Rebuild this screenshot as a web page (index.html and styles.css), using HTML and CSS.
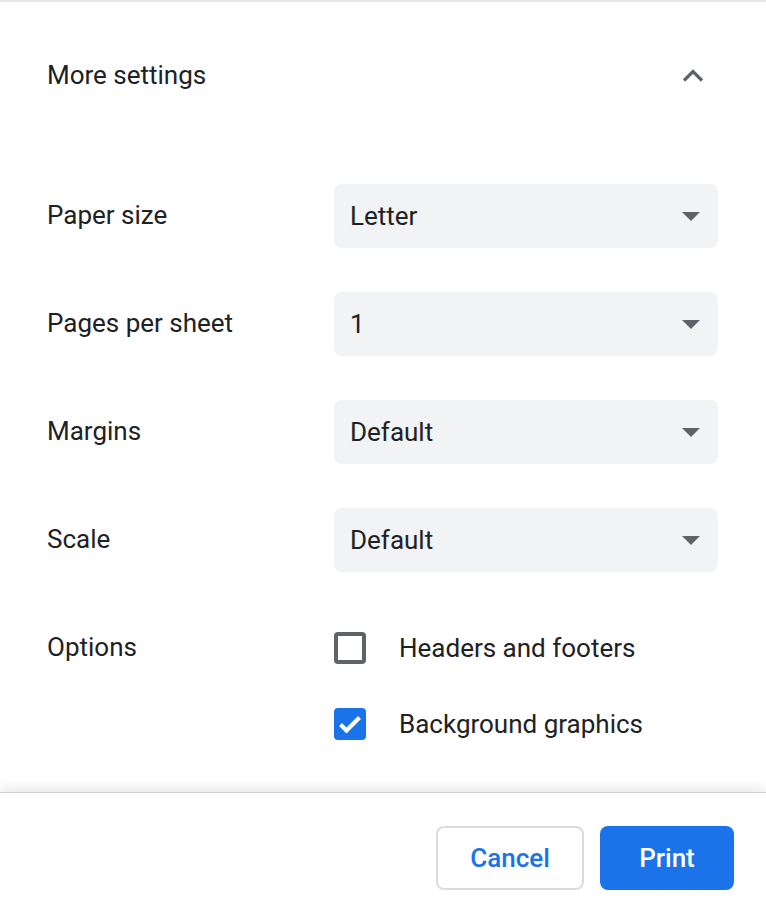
FILE: index.html
```html
<!DOCTYPE html>
<html lang="en">
<head>
<meta charset="utf-8" />
<title>Print</title>
<link rel="stylesheet" href="styles.css">
</head>
<body>
<div class="dialog">
  <div class="content">
    <div class="more">
      <span>More settings</span>
      <svg class="chevron" width="24" height="16" viewBox="0 0 24 16">
        <polyline points="3,13.5 12,4.5 21,13.5" fill="none" stroke="#5f6368" stroke-width="3.2" />
      </svg>
    </div>

    <div class="settings">
      <div class="row">
        <div class="label">Paper size</div>
        <div class="select"><span>Letter</span><i class="arrow"></i></div>
      </div>
      <div class="row">
        <div class="label">Pages per sheet</div>
        <div class="select"><span>1</span><i class="arrow"></i></div>
      </div>
      <div class="row">
        <div class="label">Margins</div>
        <div class="select"><span>Default</span><i class="arrow"></i></div>
      </div>
      <div class="row">
        <div class="label">Scale</div>
        <div class="select"><span>Default</span><i class="arrow"></i></div>
      </div>
      <div class="row options">
        <div class="label">Options</div>
        <div class="checks">
          <div class="check">
            <span class="box"></span>
            <span>Headers and footers</span>
          </div>
          <div class="check">
            <span class="box checked">
              <svg width="32" height="32" viewBox="0 0 32 32">
                <polyline points="6.5,16.5 12.5,22.5 25.5,9.5" fill="none" stroke="#fff" stroke-width="4.2" />
              </svg>
            </span>
            <span>Background graphics</span>
          </div>
        </div>
      </div>
    </div>
  </div>

  <div class="footer">
    <button class="btn cancel">Cancel</button>
    <button class="btn print">Print</button>
  </div>
</div>
</body>
</html>
```

FILE: styles.css
```css
body {
  margin: 0;
  padding: 0;
  background-color: #fff;
  font-family: Roboto, "Liberation Sans", sans-serif;
  color: #202124;
}

.dialog {
  width: 766px;
  height: 918px;
  display: flex;
  flex-direction: column;
  border-top: 2px solid #e8e8ec;
  box-sizing: border-box;
}

.content {
  height: 790px;
  padding: 0 48px 0 47px;
}

.more {
  display: flex;
  align-items: center;
  justify-content: space-between;
  height: 64px;
  margin-top: 41px;
  font-size: 26px;
}

.chevron {
  margin-right: 13px;
}

.settings {
  margin-top: 77px;
  display: flex;
  flex-direction: column;
  gap: 44px;
}

.row {
  display: flex;
  align-items: center;
  height: 64px;
}

.label {
  width: 287px;
  font-size: 26px;
  padding-bottom: 2px;
}

.select {
  flex: 1;
  height: 64px;
  background-color: #f1f3f4;
  border-radius: 8px;
  display: flex;
  align-items: center;
  justify-content: space-between;
  padding: 0 18px 0 16px;
  font-size: 26px;
}

.arrow {
  width: 0;
  height: 0;
  border-left: 9px solid transparent;
  border-right: 9px solid transparent;
  border-top: 9px solid #5f6368;
  margin-top: 1px;
}

.options {
  align-items: flex-start;
  height: auto;
}

.options .label {
  padding-top: 16px;
}

.checks {
  display: flex;
  flex-direction: column;
  gap: 44px;
  padding-top: 16px;
}

.check {
  display: flex;
  align-items: center;
  gap: 33px;
  height: 32px;
  font-size: 26px;
}

.box {
  width: 32px;
  height: 32px;
  box-sizing: border-box;
  border: 4px solid #5f6368;
  border-radius: 4px;
  display: flex;
  align-items: center;
  justify-content: center;
}

.box.checked {
  border: none;
  background-color: #1a73e8;
}

.footer {
  flex: 1;
  border-top: 1px solid #cfcfcf;
  box-shadow: 0 -5px 9px rgba(0, 0, 0, 0.08);
  display: flex;
  justify-content: flex-end;
  align-items: flex-start;
  gap: 16px;
  padding: 33px 32px 0 0;
}

.btn {
  height: 64px;
  border-radius: 8px;
  font-family: Roboto, "Liberation Sans", sans-serif;
  font-size: 26px;
  font-weight: 500;
  cursor: pointer;
}

.cancel {
  width: 148px;
  background-color: #fff;
  color: #1a73e8;
  border: 2px solid #dadce0;
}

.print {
  width: 134px;
  background-color: #1a73e8;
  color: #fff;
  border: none;
}
```
